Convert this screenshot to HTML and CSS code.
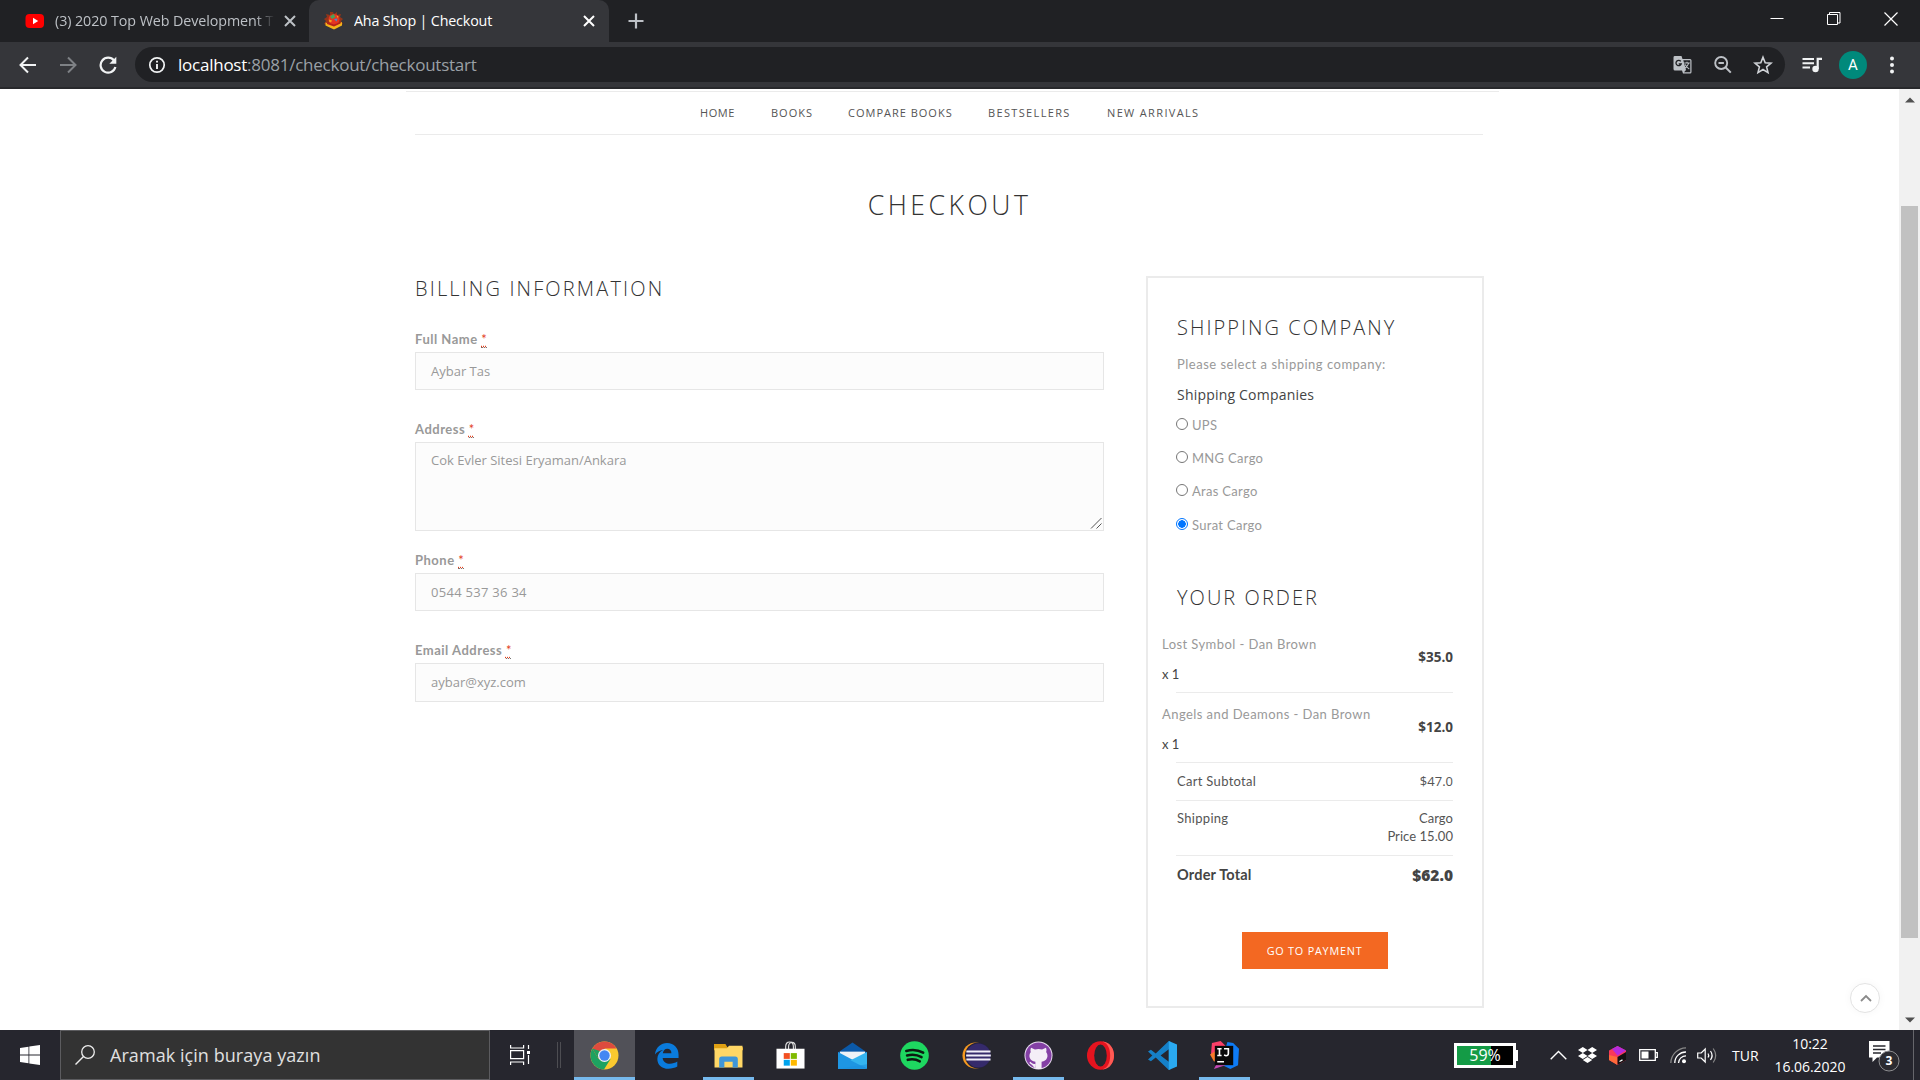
FILE: index.html
```html
<!DOCTYPE html>
<html lang="tr">
<head>
<meta charset="utf-8">
<title>Aha Shop | Checkout</title>
<link rel="stylesheet" href="styles.css">
</head>
<body>
<div class="tabs">
  <div class="tab tab-idle">
    <svg class="fav" viewBox="0 0 20 20"><rect x="0.5" y="3" width="18.5" height="14" rx="4" fill="#f00"/><path d="M8 6.8v6.4l5.2-3.2z" fill="#fff"/></svg>
    <span class="tab-title fade">(3) 2020 Top Web Development T</span>
    <svg class="x" viewBox="0 0 12 12"><path d="M1 1l10 10M11 1L1 11" stroke="#bdc1c6" stroke-width="2"/></svg>
  </div>
  <div class="tab tab-active">
    <svg class="fav" viewBox="0 0 20 20"><path d="M9 1l1 2 3-2v3l4-1-1 3 3 2-2 2 2 3-3 1-3 3-3 1-3-1-4-3-3-1 2-3-2-2 3-2-1-3 4 1V1z" fill="#b5360f" opacity=".75"/><circle cx="10" cy="8.500" r="5.500" fill="#e53422"/><path d="M1.500 11.500l8.500 3 8-3.500v3.500l-8 4-8.500-4z" fill="#f4b41a"/><path d="M3 11.200l7 2.300 6.500-2.500v1.500l-6.500 3-7-2.500z" fill="#b5201a"/><path d="M6 5.500l3.500-2.500 2 3-3.500 2z" fill="#45a35a"/><path d="M10 8l3.500-.5-1 3z" fill="#3f8ed0"/><path d="M5 8.500l3 1-1 2-2-1zM12.500 4.500l2 1-1 1.500z" fill="#f6a21c"/></svg>
    <span class="tab-title title-on">Aha Shop | Checkout</span>
    <svg class="x" viewBox="0 0 12 12"><path d="M1 1l10 10M11 1L1 11" stroke="#fff" stroke-width="2"/></svg>
  </div>
  <svg class="plus" viewBox="0 0 16 16"><path d="M8 0.500v15M0.500 8h15" stroke="#bdc1c6" stroke-width="2.200"/></svg>
  <div class="winbtns">
    <svg viewBox="0 0 14 14"><path d="M0.500 6.500h13" stroke="#fff"/></svg>
    <svg viewBox="0 0 14 14"><path d="M0.500 2.500h10v10h-10zM2.500 2.500v-2h10.500v10.500h-2.500" fill="none" stroke="#fff"/></svg>
    <svg viewBox="0 0 14 14"><path d="M0.500 0.500l13 13M13.500 0.500l-13 13" stroke="#fff" stroke-width="1.200"/></svg>
  </div>
</div>
<div class="toolbar">
  <svg class="tb" viewBox="0 0 18 18"><path d="M17 9H2M9 1.500L1.500 9 9 16.500" fill="none" stroke="#f1f3f4" stroke-width="2"/></svg>
  <svg class="tb" viewBox="0 0 18 18"><path d="M1 9h15M9 1.500L16.500 9 9 16.500" fill="none" stroke="#7e8185" stroke-width="2"/></svg>
  <svg class="tb" viewBox="0 0 18 18"><path d="M15 4.500A7.500 7.500 0 1 0 16.400 11" fill="none" stroke="#f1f3f4" stroke-width="2.200"/><path d="M17.300 0.800v7h-7z" fill="#f1f3f4"/></svg>
  <div class="omnibox">
    <svg class="info" viewBox="0 0 18 18"><circle cx="9" cy="9" r="7.200" fill="none" stroke="#f1f3f4" stroke-width="1.700"/><path d="M9 8v5M9 4.800v1.800" stroke="#f1f3f4" stroke-width="1.900"/></svg>
    <span class="url"><b>localhost</b>:8081/checkout/checkoutstart</span>
    <div class="omni-icons">
      <svg viewBox="0 0 20 20"><path d="M1.500 1h7l1 3H17a1.500 1.500 0 0 1 1.500 1.500V17a1.500 1.500 0 0 1-1.500 1.500H10l-1-3H2A1.500 1.500 0 0 1 .5 14V2.500A1.500 1.500 0 0 1 1.500 1z" fill="#bdc1c6"/><path d="M10.300 5.200H17.300v12H11l2-2.200z" fill="#202124"/><path d="M7.800 6.300A2.700 2.700 0 1 0 8.200 9H5.700" fill="none" stroke="#202124" stroke-width="1.300"/><path d="M11.300 8h5.500M14 6.800V8M15.700 8c-.5 2.500-2 4-4 5.300M12.300 9.500c.7 2 2.200 3.500 4 4.500" fill="none" stroke="#bdc1c6" stroke-width="1.100"/></svg>
      <svg viewBox="0 0 20 20"><circle cx="8.200" cy="8" r="6" fill="none" stroke="#bdc1c6" stroke-width="1.900"/><path d="M5.500 8h5.400M12.500 12.300l5.300 5.300" stroke="#bdc1c6" stroke-width="2"/></svg>
      <svg viewBox="0 0 20 20"><path d="M10 2.200l2.200 5.500 5.900.4-4.500 3.800 1.400 5.700-5-3.100-5 3.100 1.400-5.700-4.500-3.800 5.900-.4z" fill="none" stroke="#d0d3d7" stroke-width="1.600"/></svg>
    </div>
  </div>
  <svg class="queue" viewBox="0 0 21 18"><path d="M0.500 3h11.500M0.500 7.300h11.500M0.500 11.600h7.500" stroke="#f1f3f4" stroke-width="2"/><circle cx="13.500" cy="13" r="3.200" fill="#f1f3f4"/><path d="M15.700 13V2.800H20" fill="none" stroke="#f1f3f4" stroke-width="2.200"/></svg>
  <span class="avatar">A</span>
  <svg class="dots" viewBox="0 0 6 18"><circle cx="3" cy="2.500" r="2" fill="#f1f3f4"/><circle cx="3" cy="9" r="2" fill="#f1f3f4"/><circle cx="3" cy="15.500" r="2" fill="#f1f3f4"/></svg>
</div>

<div class="viewport">
  <div class="page">
    <div class="topline"></div>
    <nav class="menu">
      <a class="m-home">HOME</a><a>BOOKS</a><a>COMPARE BOOKS</a><a class="m-wide">BESTSELLERS</a><a class="m-wide">NEW ARRIVALS</a>
    </nav>
    <h1>CHECKOUT</h1>
    <div class="columns">
      <section class="billing">
        <h2 class="h-bill">BILLING INFORMATION</h2>
        <label>Full Name <abbr>*</abbr></label>
        <div class="field">Aybar Tas</div>
        <label>Address <abbr>*</abbr></label>
        <div class="field area">Cok Evler Sitesi Eryaman/Ankara
          <svg class="grip" viewBox="0 0 12 12"><path d="M1 11.500L11.500 1M6.500 11.500l5-5" stroke="#555"/></svg>
        </div>
        <label>Phone <abbr>*</abbr></label>
        <div class="field phone">0544 537 36 34</div>
        <label>Email Address <abbr>*</abbr></label>
        <div class="field mail">aybar@xyz.com</div>
      </section>
      <aside class="order">
        <h2>SHIPPING COMPANY</h2>
        <p class="hint">Please select a shipping company:</p>
        <h4>Shipping Companies</h4>
        <div class="radio"><i></i>UPS</div>
        <div class="radio"><i></i>MNG Cargo</div>
        <div class="radio"><i></i>Aras Cargo</div>
        <div class="radio"><i class="on"></i>Surat Cargo</div>
        <h2 class="h-order">YOUR ORDER</h2>
        <div class="item"><div class="what"><a>Lost Symbol - Dan Brown</a><span>x 1</span></div><b>$35.0</b></div>
        <div class="item"><div class="what"><a>Angels and Deamons - Dan Brown</a><span>x 1</span></div><b>$12.0</b></div>
        <div class="sum"><span>Cart Subtotal</span><span class="num">$47.0</span></div>
        <div class="sum ship"><span>Shipping</span><span class="right">Cargo<br>Price 15.00</span></div>
        <div class="sum total"><span>Order Total</span><b>$62.0</b></div>
        <a class="pay">GO TO PAYMENT</a>
      </aside>
    </div>
    <div class="totop"><svg viewBox="0 0 12 8"><path d="M1 7l5-5 5 5" fill="none" stroke="#8a8a8a" stroke-width="1.800"/></svg></div>
  </div>
  <div class="scroll">
    <svg viewBox="0 0 10 6"><path d="M0 5.500L5 .5l5 5z" fill="#505050"/></svg>
    <div class="thumb"></div>
    <svg viewBox="0 0 10 6"><path d="M0 .5l5 5 5-5z" fill="#505050"/></svg>
  </div>
</div>

<div class="taskbar">
  <div class="start"><svg viewBox="0 0 20 20"><path d="M0 3l8.500-1.200v7.700H0zM9.300 1.600L20 0v9.500H9.300zM0 10.400h8.500v7.800L0 17zM9.300 10.400H20V20L9.300 18.400z" fill="#fff"/></svg></div>
  <div class="search"><svg viewBox="0 0 20 20"><circle cx="13" cy="7" r="6.300" fill="none" stroke="#eee" stroke-width="1.300"/><path d="M8.500 11.500L.5 19.500" stroke="#eee" stroke-width="1.400"/></svg><span>Aramak için buraya yazın</span></div>
  <div class="taskview"><svg viewBox="0 0 20 20"><path d="M.6 0v3h13V0M.6 5.700h13v8H.6zM.6 20v-3h13v3M18.500 0v4M18.500 10v9" fill="none" stroke="#fff" stroke-width="1.200"/><path d="M17 6h3v3h-3z" fill="#fff"/></svg></div>
  <div class="sep"></div>
  <div class="apps">
    <div class="app current"><svg viewBox="0 0 28 28"><circle cx="14" cy="14" r="13.500" fill="#fbc92f"/><path d="M14 14L2.300 7.250A13.500 13.500 0 0 1 25.700 7.250H14z" fill="#dd4b3e"/><path d="M2.300 7.250A13.500 13.500 0 0 0 13.500 27.500L19.800 17.400 14 14 8.200 17.400z" fill="#1da261"/><path d="M2.300 7.250L8.200 17.400 14 14V7.250z" fill="#dd4b3e"/><path d="M2.300 7.250L8.200 17.400 10 10z" fill="#1da261"/><circle cx="14" cy="14" r="6.300" fill="#f1f1f1"/><circle cx="14" cy="14" r="5" fill="#4587f3"/></svg></div>
    <div class="app"><svg class="edge" viewBox="0 0 28 28"><path d="M2 13C3 5 8.500 1 14.500 1 22 1 26.500 6.500 26.500 13v3.500H10c.3 4 3.700 6 7.500 6 3 0 5.500-.8 7.700-2.200v5.200C22.500 27 19.500 27.700 16 27.700 9 27.700 4.500 23.500 4.500 17.500c0-4 2.200-7.500 6-9.300C7 8.500 4 10.300 2 13zM10.200 11.600h8.900c0-3-1.600-4.700-4.300-4.700-2.500 0-4.200 1.900-4.600 4.700z" fill="#0a7bdc"/></svg></div>
    <div class="app open"><svg class="folder" viewBox="0 0 28 28"><path d="M0 3h11l2 3h15v3H0z" fill="#dfa013"/><path d="M.5 7h12l2-2.500H27.500v21H.5z" fill="#ffd766"/><path d="M5 25.500v-8q0-2.500 2.500-2.500h13q2.500 0 2.500 2.500v8h-5V20h-8v5.500z" fill="#3f96d8"/></svg></div>
    <div class="app"><svg viewBox="0 0 30 30"><path d="M10 9V6c0-3 1.500-5 4-5s4 2 4 5v3M13 9V6c0-3 1.500-4.500 3.500-4.500S20 3 20 6v3" fill="none" stroke="#ddd" stroke-width="1.200"/><path d="M.5 8h29v20.500H.5z" fill="#fff"/><path d="M8 12.500h6.300v6H8z" fill="#f25022"/><path d="M15.300 12.500h6.300v6h-6.300z" fill="#7fba00"/><path d="M8 19.500h6.300v6H8z" fill="#00a4ef"/><path d="M15.300 19.500h6.300v6h-6.300z" fill="#ffb900"/></svg></div>
    <div class="app"><svg class="mail-ico" viewBox="0 0 30 30"><path d="M0 12L15 1.500 30 12v5H0z" fill="#0b59a8"/><path d="M2 11h26v12H2z" fill="#eef3f7"/><path d="M0 11.500L18 21l12 8H0z" fill="#1e96e3"/><path d="M30 11.500v17.300L13 20z" fill="#34b4ef"/><path d="M30 28.800H0L30 24z" fill="#1b8fdd" opacity=".6"/></svg></div>
    <div class="app"><svg viewBox="0 0 30 30"><circle cx="15" cy="15" r="14.800" fill="#1ed760"/><path d="M6.500 10.300c6-1.700 12.500-1 17.500 1.800M7.300 15c5-1.300 10.500-.8 15 1.700M8 19.500c4.500-1 8.700-.6 12.500 1.600" fill="none" stroke="#0c1a10" stroke-width="2.600" stroke-linecap="round"/></svg></div>
    <div class="app"><svg viewBox="0 0 30 28"><circle cx="14" cy="14" r="13.500" fill="#f79a20"/><circle cx="16.500" cy="14" r="13.500" fill="#25233a"/><circle cx="17" cy="14" r="12.500" fill="#352a6b"/><path d="M4.500 9.800h25M4.300 14h25.500M4.500 18.200h25" stroke="#f2f0fa" stroke-width="2.200"/></svg></div>
    <div class="app open"><svg viewBox="0 0 30 30"><circle cx="15" cy="15" r="14.500" fill="#e9dff0"/><circle cx="15" cy="15" r="13.500" fill="#8440a5"/><path d="M12 29v-5c-4 1-5-2-6.500-2.500M7.300 7l4 1.800a13 13 0 0 1 7.400 0L22.700 7c.8 2 .6 3.500.2 4.500 3 4 1 9.500-4.700 10V29h-6.400v-7.500C6 21 4 15.500 7 11.500c-.4-1-.5-2.500.3-4.500z" fill="#f4eef7"/><path d="M12 24.500c-3.500.8-4.500-1.500-6-2.300" fill="none" stroke="#f4eef7" stroke-width="1.500"/></svg></div>
    <div class="app"><svg viewBox="0 0 30 30"><ellipse cx="15" cy="15" rx="14" ry="14.800" fill="#e5141f"/><path d="M17 .5C25 1 29 8 29 15s-4 14-12 14.500c6-2 8-8 8-14.500S23 2.500 17 .5z" fill="#ff5a54"/><ellipse cx="15" cy="15" rx="6.500" ry="11.500" fill="#28282f"/></svg></div>
    <div class="app"><svg viewBox="0 0 30 30"><path d="M21.500 0L8 13 3 9 0 10.800 4.500 15 0 19.200 3 21 8 17l13.500 13 2-1V1zM21.500 8.500v13L13 15z" fill="#1580c8"/><path d="M21.500 0L30 3.500v23L21.500 30z" fill="#2aa9f0"/></svg></div>
    <div class="app open"><svg viewBox="0 0 30 30"><path d="M2 2l9-2 5 5-8 14-7-5z" fill="#fb3f68"/><path d="M0 14l8-5 3 14-7-2z" fill="#f97a29"/><path d="M18 1l6 1 6 6-1 17-8 4-10-5z" fill="#0e7bf5"/><path d="M4 29l5-9 10 4z" fill="#c548b5"/><path d="M5 5h19v20H5z" fill="#090909"/><path d="M7.500 8h4.500M9.800 8v7M7.500 15h4.500M14.500 8H19v5q0 2.300-2.500 2.200L14.500 14.500M7.500 21.500h7" fill="none" stroke="#fff" stroke-width="1.700"/></svg></div>
  </div>
  <div class="gauge"><div class="gauge-in"><span>59%</span></div></div>
  <svg class="t t-chev" viewBox="0 0 17 10"><path d="M.7 9.300L8.500 1.500l7.800 7.800" fill="none" stroke="#fff" stroke-width="1.400"/></svg>
  <svg class="t t-drop" viewBox="0 0 19 16"><path d="M4.800 0l4.700 3-4.700 3L0 3zM14.200 0L19 3l-4.800 3-4.700-3zM0 9l4.800-3 4.700 3-4.700 3zM14.200 6L19 9l-4.800 3-4.700-3zM4.800 13l4.700-3 4.700 3-4.700 3z" fill="#fff"/></svg>
  <svg class="t t-jb" viewBox="0 0 17 19"><path d="M8.500 0L17 4.500v9.500L8.500 19 0 14V4.500z" fill="#f8385a"/><path d="M8.500 0L17 4.500 8.500 9.500 3 3z" fill="#b52bdc"/><path d="M0 9l8.500 2v8L0 14z" fill="#ff6a3a"/><path d="M17 6v8L8.500 19V11z" fill="#111"/><path d="M10.500 15.500l3-1.600" stroke="#fff" stroke-width="1.200"/></svg>
  <svg class="t t-bat" viewBox="0 0 19 12"><path d="M.7.700h15.600v10.600H.7zM16.500 3.700h1.800v4.600h-1.800" fill="none" stroke="#fff" stroke-width="1.300"/><path d="M2.500 2.500h7v7h-7z" fill="#fff"/></svg>
  <svg class="t t-wifi" viewBox="0 0 17 17"><path d="M.8 16A15.500 15.500 0 0 1 16 .8" fill="none" stroke="#888" stroke-width="1.300"/><path d="M4.800 16A11 11 0 0 1 16 5M8.500 16A7.500 7.500 0 0 1 16 8.800" fill="none" stroke="#fff" stroke-width="1.300"/><circle cx="14" cy="14.200" r="2" fill="#fff"/></svg>
  <svg class="t t-vol" viewBox="0 0 20 17"><path d="M.7 6h3.500l4-4v13l-4-4H.7z" fill="none" stroke="#fff" stroke-width="1.200"/><path d="M11 6.500q1.500 2 0 4M13.500 4q3.200 4.500 0 9" fill="none" stroke="#fff" stroke-width="1.200"/><path d="M16.200 1.500q5 7 0 14" fill="none" stroke="#888" stroke-width="1.200"/></svg>
  <span class="lang">TUR</span>
  <div class="clock"><span>10:22</span><span class="date">16.06.2020</span></div>
  <div class="notif"><svg viewBox="0 0 31 31"><path d="M0 0h20.500v16.500H8L3.500 21v-4.500H0z" fill="#fff"/><path d="M4 5h12.500M4 8.500h12.500M4 12h8" stroke="#28282f" stroke-width="1.300"/><circle cx="20" cy="20" r="10" fill="#2b2b31" stroke="#8d8d90"/></svg><b>3</b></div>
  <div class="desk"></div>
</div>
</body>
</html>
```
FILE: styles.css
```css
* { box-sizing: border-box; }
body { margin: 0; width: 1920px; height: 1080px; overflow: hidden; display: flex; flex-direction: column; background: #fff; font-family: Lato, sans-serif; }
svg { display: block; flex: none; }
h1, h2, h4, p { margin: 0; font-weight: 400; }

.tabs { height: 42px; background: #202124; display: flex; align-items: center; }
.tab { height: 42px; display: flex; align-items: center; font: 14.3px "Open Sans", sans-serif; }
.tab-idle { width: 309px; padding-left: 25px; color: #bdc1c6; }
.tab-active { width: 300px; background: #35363a; border-radius: 10px 10px 0 0; padding-left: 15px; color: #fff; }
.fav { width: 20px; height: 20px; margin-right: 10px; }
.tab-title { width: 219px; overflow: hidden; white-space: nowrap; line-height: 42px; letter-spacing: -0.080px; }
.title-on { width: 218px; letter-spacing: -0.170px; }
.fade { -webkit-mask-image: linear-gradient(90deg, #000 200px, transparent 220px); mask-image: linear-gradient(90deg, #000 200px, transparent 220px); }
.x { width: 12px; height: 12px; margin-left: 10px; }
.plus { width: 16px; height: 16px; margin-left: 19px; }
.tab-active .x { margin-left: 11px; }
.winbtns { margin-left: auto; display: flex; gap: 43px; padding: 0 22px 5px 0; }
.winbtns svg { width: 14px; height: 14px; }

.toolbar { height: 47px; background: #35363a; border-bottom: 2px solid #28292c; display: flex; align-items: center; padding-left: 19px; }
.tb { width: 18px; height: 18px; margin-right: 22px; }
.omnibox { width: 1650px; height: 35px; border-radius: 18px; background: #202124; display: flex; align-items: center; padding-left: 13px; margin-left: -4px; }
.info { width: 18px; height: 18px; margin-right: 12px; }
.url { font: 17px/35px "Open Sans", sans-serif; color: #9aa0a6; letter-spacing: -0.240px; }
.url b { font-weight: 400; color: #fff; }
.omni-icons { margin-left: auto; margin-right: 12px; display: flex; gap: 20px; }
.omni-icons svg { width: 20px; height: 20px; }
.queue { width: 21px; height: 18px; margin-left: 17px; }
.avatar { width: 28px; height: 28px; border-radius: 50%; background: #00897b; color: #fff; font: 15px/28px Roboto, sans-serif; text-align: center; margin-left: 16px; }
.dots { width: 6px; height: 18px; margin-left: 22px; }

.viewport { height: 941px; display: flex; }
.page { width: 1899px; position: relative; }
.topline { height: 3px; margin: 0 400px 0 406px; border-bottom: 1px solid #ebebeb; }
.menu { margin: 0 416px 0 415px; height: 43px; border-bottom: 1px solid #ebebeb; padding-left: 285px; display: grid; grid-template-columns: 71px 77px 140px 119px 140px; font: 11px/42px "Open Sans", sans-serif; letter-spacing: 1px; color: #555; }
.m-home { letter-spacing: .6px; }
.m-wide { letter-spacing: 1.350px; }
h1 { height: 140px; line-height: 141px; text-align: center; font-family: "Open Sans", sans-serif; font-weight: 350; font-size: 26.600px; letter-spacing: 3.500px; color: #333; }
.columns { display: flex; justify-content: space-between; margin: 1px 415px 0; }
.billing { width: 689px; }
h2 { font: 350 20px/26px "Open Sans", sans-serif; height: 26px; letter-spacing: 2.150px; color: #333; }
.h-bill { margin-bottom: 26px; }
label { display: block; height: 22px; line-height: 22px; margin-bottom: 2px; font-size: 13px; font-weight: 700; color: #999; letter-spacing: .500px; }
abbr { color: #e2401c; font-weight: 400; letter-spacing: 0; text-decoration: underline dotted; text-underline-offset: 2px; border-bottom: 1px dotted #777; }
.field { height: 38px; line-height: 36px; border: 1px solid #e6e6e6; background: #fcfcfc; padding-left: 15px; margin-bottom: 28px; font-family: "Open Sans", sans-serif; font-size: 13px; color: #999; }
.area { height: 89px; line-height: 35px; margin-bottom: 18px; position: relative; }
.phone { letter-spacing: .280px; }
.mail { height: 39px; }
.grip { position: absolute; right: 1px; bottom: 1px; width: 12px; height: 12px; }

.order { width: 338px; height: 732px; border: 2px solid #ebebeb; padding: 36px 29px 0 28px; font-size: 13px; color: #999; letter-spacing: .300px; }
.order h2 { line-height: 28px; letter-spacing: 2.050px; }
.hint { margin: 14px 0 10px 1px; line-height: 20px; white-space: nowrap; letter-spacing: .500px; }
h4 { font: 14px/21px "Open Sans", sans-serif; color: #444; margin: 0 0 3px 1px; letter-spacing: .200px; }
.radio { height: 33.400px; display: flex; align-items: center; }
.radio i { width: 12px; height: 12px; border: 1px solid #767676; border-radius: 50%; margin: -2px 4px 0 0; }
.radio .on { border-color: #0075ff; background: radial-gradient(circle, #0075ff 3.500px, #fff 4px); }
.order h2 { padding-left: 1px; }
.order .h-order { margin: 42px 0 13px; }
.item { height: 70px; border-bottom: 1px solid #ebebeb; display: flex; justify-content: space-between; align-items: center; color: #444; }
.item b, .total b, .num { font-family: "Open Sans", sans-serif; letter-spacing: 0; }
.item b { font-size: 13.500px; }
.what { margin-left: -14px; line-height: 30px; padding-top: 3px; }
.what a { color: #999; letter-spacing: .430px; }
.what span { letter-spacing: 0; }
.what a, .what span { display: block; }
.sum { display: flex; justify-content: space-between; height: 38px; line-height: 36px; border-bottom: 1px solid #ebebeb; color: #555; padding-left: 1px; }
.ship { height: 55px; line-height: 18px; padding-top: 8px; }
.right { text-align: right; letter-spacing: .050px; }
.total { border: 0; line-height: 38px; font-size: 14.500px; font-weight: 700; color: #444; letter-spacing: .200px; }
.total b { font-size: 15.500px; line-height: 39px; }
.pay { display: block; width: 146px; height: 37px; margin: 38px auto 0; background: #f36822; color: #fff; text-align: center; font: 10.800px/37px "Open Sans", sans-serif; letter-spacing: .800px; }
.totop { position: absolute; left: 1850px; top: 894px; width: 30px; height: 30px; border: 1px solid #e3e3e3; border-radius: 50%; background: #fff; box-shadow: 0 0 8px rgba(0,0,0,.04); padding: 10px 9px; }
.totop svg { width: 12px; height: 8px; }
.scroll { width: 21px; background: #f1f1f1; display: flex; flex-direction: column; align-items: center; padding: 8px 0 7px; }
.scroll svg { width: 10px; height: 6px; }
.thumb { width: 17px; height: 732px; background: #c1c1c1; margin: 103px 0 79px; }

.taskbar { height: 50px; background: #26262e; display: flex; align-items: center; color: #fff; font-family: "Open Sans", sans-serif; }
.start { width: 60px; padding-left: 20px; }
.start svg, .search svg, .taskview svg { width: 20px; height: 20px; }
.search { width: 430px; height: 50px; background: #333; border: 1px solid #5c5c5f; display: flex; align-items: center; padding-left: 14px; gap: 15px; font-size: 18px; color: #e0e0e0; letter-spacing: .060px; }
.taskview { margin-left: 20px; }
.sep { width: 4px; height: 26px; margin: 0 13px 0 27px; border: solid #4d4d52; border-width: 0 1px; }
.apps { display: flex; }
.app { width: 62px; height: 50px; display: flex; align-items: center; justify-content: center; padding-right: 2px; }
.app svg { width: 29px; height: 29px; }
.app .edge { width: 27px; height: 27px; }
.current { background: #515158; border-bottom: 3px solid #76b9ed; padding: 3px 0 0; width: 61px; margin-right: 1px; }
.open { background: linear-gradient(#76b9ed, #76b9ed) 5px bottom / 51px 3px no-repeat; }
.gauge { width: 62px; height: 25px; border: 3px solid #fff; background: #000; margin-left: 198px; position: relative; }
.gauge::after { content: ""; position: absolute; right: -5px; top: 4px; width: 3px; height: 11px; background: #fff; }
.gauge-in { height: 19px; background: linear-gradient(90deg, #149b46 34px, #000 34px); text-align: center; font-size: 16px; line-height: 18px; }
.t-chev { width: 17px; height: 10px; margin-left: 34px; }
.t-drop { width: 19px; height: 16px; margin-left: 11px; }
.t-jb { width: 17px; height: 19px; margin-left: 12px; }
.t-bat { width: 19px; height: 12px; margin-left: 13px; }
.t-wifi { width: 17px; height: 17px; margin-left: 12px; }
.t-vol { width: 20px; height: 17px; margin-left: 10px; }
.lang { width: 28px; margin-left: 15px; font-size: 14px; }
.clock { width: 80px; margin-left: 10px; text-align: center; font-size: 14px; line-height: 23px; letter-spacing: -0.050px; }
.clock span { display: block; }
.notif { margin-left: 19px; width: 31px; height: 34px; position: relative; padding-top: 3px; }
.notif svg { width: 31px; height: 31px; }
.notif b { position: absolute; left: 10px; top: 13px; width: 20px; line-height: 20px; text-align: center; font-size: 12px; }
.desk { width: 1px; height: 50px; background: #66666b; margin-left: 13px; }
```
